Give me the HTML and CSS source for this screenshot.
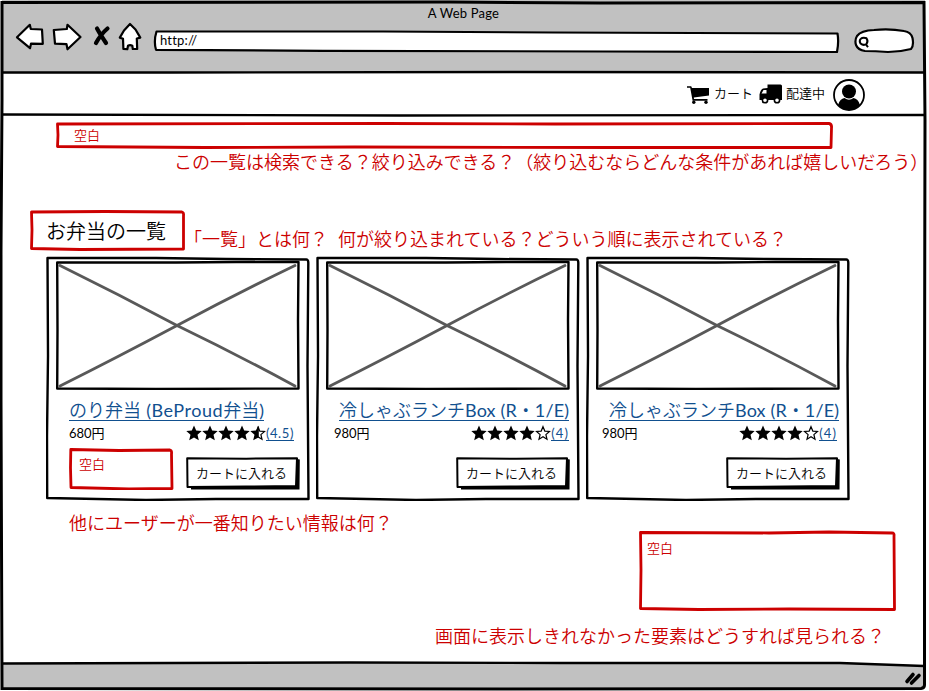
FILE: index.html
```html
<!DOCTYPE html>
<html lang="ja">
<head>
<meta charset="utf-8">
<title>A Web Page</title>
<link rel="stylesheet" href="styles.css">
</head>
<body>
<svg width="0" height="0" class="defs">
  <symbol id="card-frame" viewBox="0 0 264 245">
    <path d="M1.500 2 L110 2 L180 3 L260.500 3.500 Q262.500 3.500 262.300 8 L261.500 110 L262.500 243 L170 243 L100 244 L1.200 242 L1 180 L2 100 Z" class="ink"/>
  </symbol>
  <symbol id="photo" viewBox="0 0 244 130">
    <path d="M4 5.500 Q62 34 121 65.500 Q180 94 239 126 M239 5.500 Q180 34 121 65.500 Q60 98 4 126" class="cross"/>
    <path d="M1.200 2.500 L120 2.500 L180 2 L242.500 2 L242 60 L242.500 128.500 L100 129 L1.200 128.500 L1.500 70 Z" class="ink"/>
  </symbol>
  <symbol id="button-frame" viewBox="0 0 114 33">
    <path d="M5 32.500 L5 29 L110 28 L111 2 L113.800 2.500 L113.500 32.500 Z"/>
    <path d="M1.200 1.200 L60 1.700 L111 1.200 L110 29 L60 29.500 L1.500 30 Z" class="button-face"/>
  </symbol>
  <symbol id="star" viewBox="0 0 16 16">
    <path d="M8 .5 L10.200 5.500 L15.700 6 L11.500 9.800 L12.800 15.200 L8 12.400 L3.200 15.200 L4.500 9.800 L.3 6 L5.800 5.500 Z"/>
  </symbol>
  <symbol id="star-half" viewBox="0 0 16 16">
    <path d="M8 1.500 L9.800 6.100 L14.600 6.500 L10.900 9.600 L12 14.200 L8 11.800 Z" fill="#fff" stroke="#000" stroke-width="1.200"/>
    <path d="M8.500 .5 L8.500 12.400 L3.200 15.200 L4.500 9.800 L.3 6 L5.800 5.500 Z"/>
  </symbol>
  <symbol id="star-empty" viewBox="0 0 16 16">
    <path d="M8 1.700 L9.800 6.100 L14.500 6.500 L10.900 9.600 L12 14.200 L8 11.800 L4 14.200 L5.100 9.600 L1.500 6.500 L6.200 6.100 Z" fill="#fff" stroke="#000" stroke-width="1.200"/>
  </symbol>
</svg>

<div class="window">
  <div class="page">
    <header class="toolbar">
      <div class="title">A Web Page</div>
      <div class="controls">
        <svg class="nav-icons" width="130" height="32" viewBox="14 21 130 32">
          <g class="nav-shape">
            <path d="M17 37.300 L29.800 24.800 L30.800 29 L42 29.500 L42.800 43.800 L31 43.700 L30 48.200 Z"/>
            <path d="M53.800 30 L66.800 29 L67.500 24.800 L80.500 37 L67.500 49.300 L66.500 44.200 L55 43.600 Z"/>
            <path d="M130 24 L135.500 29.500 L140.300 37.600 L136.800 38.500 L137.200 49 L132.800 49 L132.300 45.700 Q130 44.500 128 45.700 L127.300 49.200 L123.400 49 L123 38.800 L119.800 37.600 L124 30.500 Z"/>
          </g>
          <path d="M97 28.500 Q100 34 106 43 M107.500 28.500 Q101 34 96 43" class="stop"/>
        </svg>
        <div class="stack url">
          <svg width="687" height="24" viewBox="0 0 687 24">
            <path d="M3.500 2.500 L230 2.500 L400 3.500 L684.500 4.500 Q686 13 684 23 L450 22.500 L170 21.800 L3 20.800 Q.5 12 3.500 2.500 Z" class="field"/>
          </svg>
          <span>http://</span>
        </div>
        <svg class="search" width="62" height="28" viewBox="853 27 62 28">
          <path d="M857 36 Q861 30.500 874 30 Q890 28.500 904 31 Q911 32 912.500 38 Q914 46 911 49 Q900 52 888 52 Q875 51 865 51 Q858 50 856 45 Q854.500 40 857 36 Z" class="field"/>
          <path d="M860.500 39 Q863 37 866.500 38.300 Q868.500 41 866.500 44 Q863.500 46 860.500 43.500 Q859 41 860.500 39 M865.500 44 L868 47.200" class="lens"/>
        </svg>
      </div>
    </header>

    <nav class="menu">
      <svg width="23" height="19" viewBox="0 0 23 19" class="cart">
        <path d="M0 .2 L4.200 .2 L5 2 L22 2 L22 9.500 L6.800 11.500 L7 13 L20.500 13 L20.500 14.700 L5.600 14.700 L3.200 1.800 L0 1.800 Z"/>
        <circle cx="6.800" cy="16.300" r="1.700"/><circle cx="19" cy="16.300" r="1.700"/>
      </svg>
      <span class="cart-label">カート</span>
      <svg width="24" height="20" viewBox="0 0 24 20" class="truck">
        <path d="M8.500 -.5 L21.500 -.5 Q23 -.5 23 1 L23 15 L.5 15 L.5 9.500 Q1.500 4.500 4 3.500 L8.500 3 Z"/>
        <path d="M2.500 8.500 L4.500 5 L7.500 5 L7.500 8.500 Z" fill="#fff"/>
        <g fill="#fff" stroke="#000" stroke-width="1.600"><circle cx="6" cy="15.200" r="2.600"/><circle cx="18" cy="15.200" r="2.600"/></g>
      </svg>
      <span class="truck-label">配達中</span>
      <svg width="32" height="32" viewBox="0 0 32 32" class="avatar">
        <circle cx="16" cy="16" r="15" fill="#fff" stroke="#000" stroke-width="1.800"/>
        <circle cx="16" cy="12.500" r="7"/>
        <path d="M5 26 Q7 19.500 11.500 19 Q16 22.500 20.500 19 Q25 19.500 27 26 Q22 31 16 31 Q10 31 5 26 Z"/>
      </svg>
    </nav>

    <main>
      <div class="stack blank filter">
        <svg width="778" height="29" viewBox="0 0 778 29"><path d="M2.500 2 L330 1.500 L500 2 L774 1.500 Q777 2 776.500 6 L776 25.500 L560 25.500 L300 25 L150 25.500 L2.500 24.500 L3 13 Z" class="red-ink"/></svg>
        <span>空白</span>
      </div>
      <p class="note note-filter">この一覧は検索できる？絞り込みできる？（絞り込むならどんな条件があれば嬉しいだろう）</p>

      <div class="heading-row">
        <div class="stack heading">
          <svg width="156" height="41" viewBox="0 0 156 41"><path d="M1.500 2 L75 1.500 L152 2 Q154 2.500 153.500 6 L153.500 39 L50 39.500 L1.500 38.500 L2 20 Z" class="red-ink"/></svg>
          <h1>お弁当の一覧</h1>
        </div>
        <p class="note">「一覧」とは何？<span class="gap"></span>何が絞り込まれている？どういう順に表示されている？</p>
      </div>

      <div class="cards">
        <article class="stack card">
          <svg width="264" height="245"><use href="#card-frame"/></svg>
          <div class="card-body">
            <svg width="244" height="130"><use href="#photo"/></svg>
            <a class="name">のり弁当<span class="latin first"> (BeProud</span>弁当<span class="latin">)</span></a>
            <div class="info info-a">
              <span class="price">680円</span>
              <span class="rating"><svg width="80" height="16"><use href="#star" width="16" height="16"/><use href="#star" x="16" width="16" height="16"/><use href="#star" x="32" width="16" height="16"/><use href="#star" x="48" width="16" height="16"/><use href="#star-half" x="64" width="16" height="16"/></svg><a>(4.5)</a></span>
            </div>
            <div class="actions">
              <div class="stack blank extra">
                <svg width="105" height="42" viewBox="0 0 105 42"><path d="M1.800 1.500 L50 2.500 L101 2 Q103 2.500 102.500 6 L103 40.500 L60 41 L2 39.500 L1.500 20 Z" class="red-ink"/></svg>
                <span>空白</span>
              </div>
              <div class="stack buy"><svg width="114" height="33"><use href="#button-frame"/></svg><span>カートに入れる</span></div>
            </div>
          </div>
        </article>
        <article class="stack card">
          <svg width="264" height="245"><use href="#card-frame"/></svg>
          <div class="card-body">
            <svg width="244" height="130"><use href="#photo"/></svg>
            <a class="name">冷しゃぶランチ<span class="latin">Box (R</span>・<span class="latin">1/E)</span></a>
            <div class="info info-b">
              <span class="price">980円</span>
              <span class="rating"><svg width="80" height="16"><use href="#star" width="16" height="16"/><use href="#star" x="16" width="16" height="16"/><use href="#star" x="32" width="16" height="16"/><use href="#star" x="48" width="16" height="16"/><use href="#star-empty" x="64" width="16" height="16"/></svg><a>(4)</a></span>
            </div>
            <div class="actions">
              <div class="stack buy"><svg width="114" height="33"><use href="#button-frame"/></svg><span>カートに入れる</span></div>
            </div>
          </div>
        </article>
        <article class="stack card">
          <svg width="264" height="245"><use href="#card-frame"/></svg>
          <div class="card-body">
            <svg width="244" height="130"><use href="#photo"/></svg>
            <a class="name">冷しゃぶランチ<span class="latin">Box (R</span>・<span class="latin">1/E)</span></a>
            <div class="info info-c">
              <span class="price">980円</span>
              <span class="rating"><svg width="80" height="16"><use href="#star" width="16" height="16"/><use href="#star" x="16" width="16" height="16"/><use href="#star" x="32" width="16" height="16"/><use href="#star" x="48" width="16" height="16"/><use href="#star-empty" x="64" width="16" height="16"/></svg><a>(4)</a></span>
            </div>
            <div class="actions">
              <div class="stack buy"><svg width="114" height="33"><use href="#button-frame"/></svg><span>カートに入れる</span></div>
            </div>
          </div>
        </article>
      </div>

      <p class="note note-info">他にユーザーが一番知りたい情報は何？</p>
      <div class="stack blank more">
        <svg width="258" height="81" viewBox="0 0 258 81"><path d="M1.500 2.500 L130 3 L190 2 L253 3 Q255.500 3 255 6 L255.500 79.500 L150 79 L60 79.500 L1.500 78.500 L2 40 Z" class="red-ink"/></svg>
        <span>空白</span>
      </div>
      <p class="note note-more">画面に表示しきれなかった要素はどうすれば見られる？</p>
    </main>

    <footer></footer>
  </div>

  <svg class="frame" width="929" height="691" viewBox="0 0 929 691">
    <path d="M1 663 L3 663.500 L560 663 L840 663.500 L924 666 L924 688 L3 688 Z" fill="#c1c1c1"/>
    <path d="M2 2.500 L450 2 L600 3 L924 2.500 L925 120 L924.500 400 L924.500 560 L924.500 685 Q924.500 688 921 688.500 L500 689 L2 688.500 L1 400 L1 250 L2 100 Z" class="frame-line"/>
    <path d="M3 72.500 L100 72.500 L170 72.500 L520 72 L924 72.500 M3 114.500 L400 115.500 L924 115 M3 663.500 L350 662.500 L560 663 L840 663 L924 666" class="ink"/>
    <path d="M907 681.500 L913 674.500 M911.500 683 L919 675.500" class="grip"/>
  </svg>
</div>
</body>
</html>
```

FILE: styles.css
```css
* { box-sizing: border-box; }
body {
  margin: 0;
  background: #fff;
  color: #000;
  font-family: Lato, "Noto Sans CJK JP", sans-serif;
  font-weight: 350;
  font-size: 13px;
  overflow: hidden;
}
svg { display: block; flex: none; }
p, h1 { margin: 0; }
.defs { display: none; }
.ink { fill: none; stroke: #000; stroke-width: 2.400; stroke-linejoin: round; }
.red-ink { fill: none; stroke: #c00; stroke-width: 2.800; stroke-linejoin: round; }
.cross { fill: none; stroke: #595959; stroke-width: 2.800; stroke-linecap: round; }
.button-face { fill: #fff; stroke: #000; stroke-width: 2; stroke-linejoin: round; }
.frame-line { fill: none; stroke: #000; stroke-width: 3; }
.grip { fill: none; stroke: #000; stroke-width: 3.600; stroke-linecap: round; }
.nav-shape, .field { fill: #fff; stroke: #000; stroke-width: 2.200; stroke-linejoin: round; }
.stop { fill: none; stroke: #000; stroke-width: 4.200; stroke-linecap: round; }
.lens { fill: none; stroke: #000; stroke-width: 2; }

.stack, .window { display: grid; }
.stack > *, .window > * { grid-area: 1 / 1; }
.window { width: 929px; height: 691px; }
.page { display: flex; flex-direction: column; }

.toolbar { height: 72px; width: 923px; margin-left: 2px; background: #c1c1c1; }
.title {
  padding-top: 5px;
  height: 21px;
  line-height: 17px;
  text-align: center;
  font-size: 13px;
  font-weight: 400;
  letter-spacing: 0.200px;
}
.controls { display: flex; padding-left: 12px; }
.url { margin: 8px 0 0 9px; }
.url span { padding: 3px 0 0 7px; font: 400 13px/17px Lato, sans-serif; letter-spacing: 0.200px; }
.search { margin: 6px 0 0 13px; }

.menu { display: flex; align-items: flex-start; height: 43px; padding-left: 687px; line-height: 20px; }
.cart { margin-top: 14px; }
.cart-label { margin: 11px 0 0 4px; width: 45px; }
.truck { margin-top: 13px; overflow: visible; }
.truck-label { margin: 11px 0 0 3px; width: 47px; }
.avatar { margin-top: 7px; }

main { height: 549px; display: flex; flex-direction: column; align-items: flex-start; }
.note { color: #c00; font-size: 18px; line-height: 26px; white-space: nowrap; }
.blank { color: #c00; }
.blank span { line-height: 20px; }
.filter { margin: 7px 0 0 55px; }
.filter span { padding: 3px 0 0 19px; }
.note-filter { margin: -2px 0 0 174px; }
.heading-row { display: flex; height: 41px; margin: 35px 0 0 30px; }
.heading h1 { padding-left: 16px; font-size: 20px; line-height: 42px; font-weight: 350; }
.heading-row .note { margin-top: 16px; margin-left: -2px; }
.gap { display: inline-block; width: 10px; }

.cards { display: flex; gap: 6px; margin: 5px 0 0 46px; }
.card-body { display: flex; flex-direction: column; align-items: flex-start; padding: 4px 0 0 10px; }
.name {
  height: 22px;
  margin: 9px 0 0 13px;
  font-size: 18px;
  line-height: 22px;
  color: #11508f;
  white-space: pre;
  border-bottom: 1px solid #11508f;
}
.latin { font-weight: 400; letter-spacing: 0.150px; }
.first { letter-spacing: 0.550px; }
.info { display: flex; justify-content: space-between; height: 18px; margin-top: 3px; line-height: 18px; }
.info-a { width: 225px; margin-left: 13px; }
.info-b { width: 235px; margin-left: 8px; }
.info-c { width: 235px; margin-left: 6px; }
.rating { display: flex; }
.rating svg { margin-top: 1px; }
.rating a { color: #11508f; height: 17px; line-height: 18px; letter-spacing: 0.600px; border-bottom: 1px solid #11508f; }
.info-b .rating a, .info-c .rating a { letter-spacing: 1.100px; }
.price, .rating a { font-weight: 400; }
.actions { display: flex; justify-content: space-between; align-items: flex-start; width: 231px; height: 43px; margin: 6px 0 0 13px; }
.buy { margin: 9px 0 0 auto; }
.buy span { padding: 7px 0 0 10px; line-height: 18px; }
.extra span { padding: 6px 0 0 10px; }

.note-info { margin: 9px 0 0 69px; }
.more { margin: -6px 0 0 639px; }
.more span { padding: 8px 0 0 8px; }
.note-more { margin: 12px 0 0 435px; }
footer { height: 27px; }
.frame { pointer-events: none; }
```
